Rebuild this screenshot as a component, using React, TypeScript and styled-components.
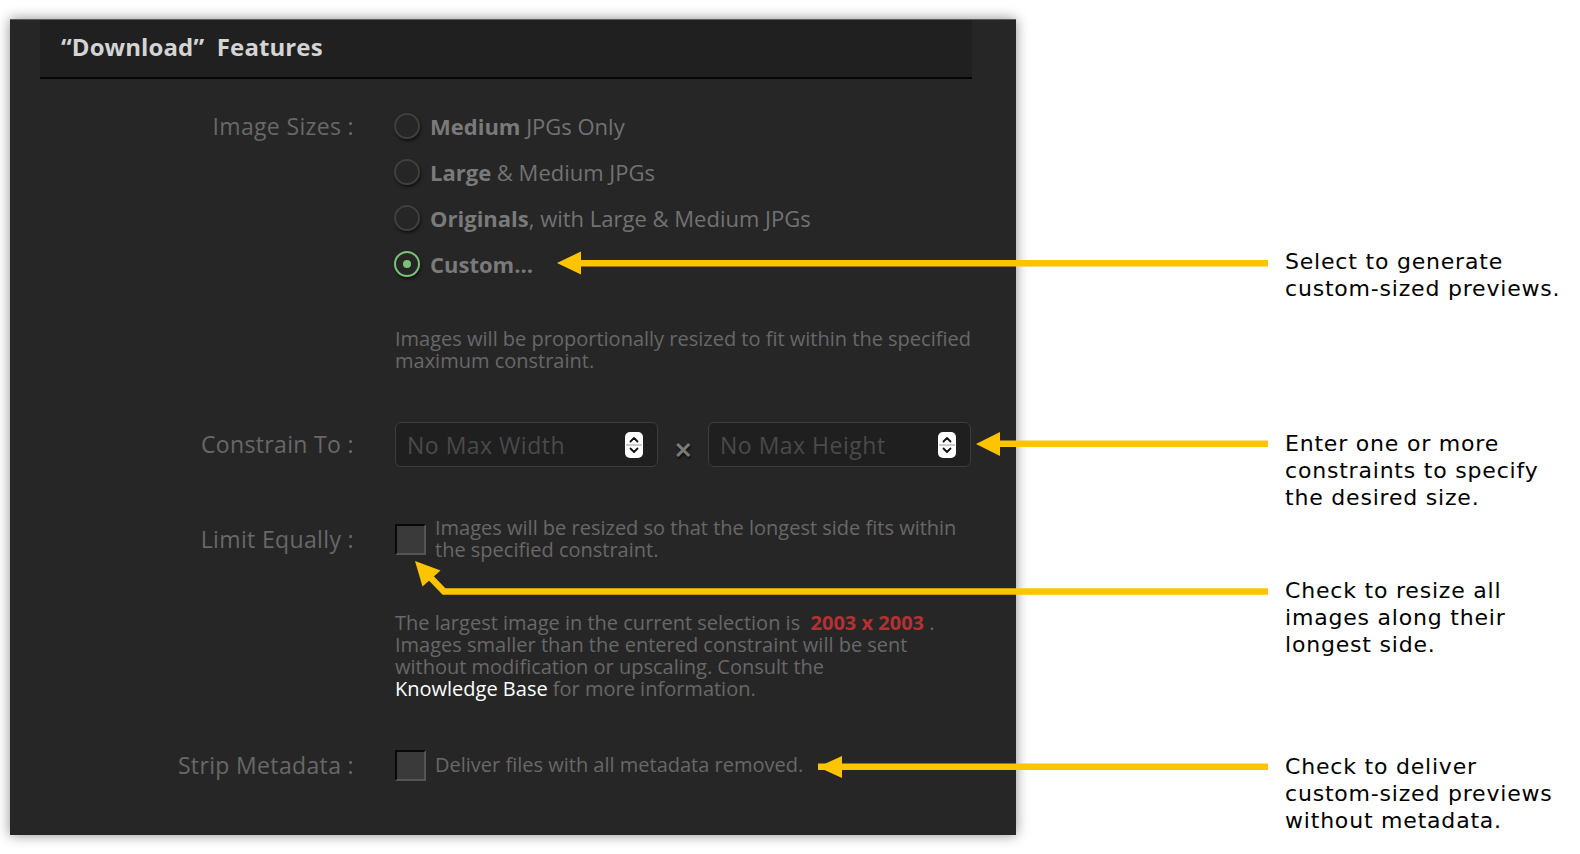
import React from 'react';
import styled, { createGlobalStyle } from 'styled-components';

const GlobalStyle = createGlobalStyle`
  html, body {
    margin: 0;
    padding: 0;
    background: #ffffff;
  }
  body {
    font-family: "Open Sans", "Noto Sans", sans-serif;
  }
`;

const YELLOW = '#ffc400';

const sizeOptions = [
  { bold: 'Medium', rest: ' JPGs Only', checked: false },
  { bold: 'Large', rest: ' & Medium JPGs', checked: false },
  { bold: 'Originals', rest: ', with Large & Medium JPGs', checked: false },
  { bold: 'Custom...', rest: '', checked: true },
];

const notes = [
  { top: 248, lines: ['Select to generate', 'custom-sized previews.'] },
  { top: 128, lines: ['Enter one or more', 'constraints to specify', 'the desired size.'] },
  { top: 66, lines: ['Check to resize all', 'images along their', 'longest side.'] },
  { top: 95, lines: ['Check to deliver', 'custom-sized previews', 'without metadata.'] },
];

const Spinner: React.FC = () => (
  <SpinBox>
    <svg width="18" height="26" viewBox="0 0 18 26">
      <path d="M5.5 9.5 L9 6 L12.5 9.5" fill="none" stroke="#111" strokeWidth="1.8" strokeLinecap="round" strokeLinejoin="round" />
      <line x1="1" y1="13" x2="17" y2="13" stroke="#bdbdbd" strokeWidth="1.5" />
      <path d="M5.5 16.5 L9 20 L12.5 16.5" fill="none" stroke="#111" strokeWidth="1.8" strokeLinecap="round" strokeLinejoin="round" />
    </svg>
  </SpinBox>
);

// Arrows sit over the panel and the page, so they get their own layer
const Arrows: React.FC = () => (
  <ArrowLayer width="1580" height="854" viewBox="0 0 1580 854">
    <g fill={YELLOW} stroke="none">
      <rect x="578" y="260" width="690" height="6.5" />
      <polygon points="557,263 581,251.5 581,274.5" />

      <rect x="998" y="440.5" width="270" height="6.5" />
      <polygon points="976,444 1000,432 1000,456" />

      <rect x="818" y="763.5" width="450" height="6.5" />
      <polygon points="818,767 842,756 842,778" />

      <polygon points="415,561 440.5,570.5 422.5,586.5" />
    </g>
    <polyline points="1268,591.5 444,591.5 429,576" fill="none" stroke={YELLOW} strokeWidth="6.5" strokeLinejoin="miter" />
  </ArrowLayer>
);

const App: React.FC = () => {
  return (
    <Page>
      <GlobalStyle />
      <Panel>
        <Header>
          <HeaderTitle>“Download”&nbsp; Features</HeaderTitle>
        </Header>

        <FieldRow $mt={24}>
          <Label $lh={46}>Image Sizes :</Label>
          <RadioList>
            {sizeOptions.map(opt => (
              <RadioRow key={opt.bold}>
                <Radio $checked={opt.checked} />
                <RadioText>
                  <b>{opt.bold}</b>
                  {opt.rest}
                </RadioText>
              </RadioRow>
            ))}
          </RadioList>
        </FieldRow>

        <FieldRow $mt={41}>
          <span />
          <Note>
            Images will be proportionally resized to fit within the specified
            <br />
            maximum constraint.
          </Note>
        </FieldRow>

        <FieldRow $mt={50}>
          <Label $lh={45}>Constrain To :</Label>
          <InputGroup>
            <NumberBox>
              <Placeholder>No Max Width</Placeholder>
              <Spinner />
            </NumberBox>
            <Times>✕</Times>
            <NumberBox>
              <Placeholder>No Max Height</Placeholder>
              <Spinner />
            </NumberBox>
          </InputGroup>
        </FieldRow>

        <FieldRow $mt={50}>
          <Label $lh={44}>Limit Equally :</Label>
          <CheckRow>
            <CheckBox />
            <Note>
              Images will be resized so that the longest side fits within
              <br />
              the specified constraint.
            </Note>
          </CheckRow>
        </FieldRow>

        <FieldRow $mt={51}>
          <span />
          <Note>
            The largest image in the current selection is&nbsp; <Red>2003 x 2003</Red> .
            <br />
            Images smaller than the entered constraint will be sent
            <br />
            without modification or upscaling. Consult the
            <br />
            <Link>Knowledge Base</Link> for more information.
          </Note>
        </FieldRow>

        <FieldRow $mt={49}>
          <Label $lh={32}>Strip Metadata :</Label>
          <CheckRow>
            <CheckBox />
            <Note $lh={32}>Deliver files with all metadata removed.</Note>
          </CheckRow>
        </FieldRow>
      </Panel>

      <NoteColumn>
        {notes.map(n => (
          <Callout key={n.lines[0]} $mt={n.top}>
            {n.lines.map(l => (
              <div key={l}>{l}</div>
            ))}
          </Callout>
        ))}
      </NoteColumn>

      <Arrows />
    </Page>
  );
};

const Page = styled.div`
  position: relative;
  width: 1580px;
  height: 854px;
  overflow: hidden;
  display: flex;
  align-items: flex-start;
  background: #fff;
`;

const Panel = styled.div`
  width: 1006px;
  margin: 19px 0 0 10px;
  padding-bottom: 54px;
  background: #262626;
  border-top: 1px solid #5c5c5c;
  box-shadow: 0 0 12px rgba(0, 0, 0, 0.45);
  box-sizing: border-box;
`;

const Header = styled.div`
  margin: 0 44px 0 30px;
  height: 59px;
  background: #202020;
  border-bottom: 2px solid #060606;
  display: flex;
  align-items: center;
  padding: 0 0 5px 21px;
  box-sizing: border-box;
`;

const HeaderTitle = styled.h1`
  margin: 0;
  font-size: 24px;
  font-weight: 700;
  color: #d4d4d4;
  letter-spacing: 0.1px;
`;

const FieldRow = styled.div<{ $mt: number }>`
  display: grid;
  grid-template-columns: 344px 1fr;
  column-gap: 41px;
  margin-top: ${p => p.$mt}px;
  align-items: start;
`;

const Label = styled.div<{ $lh: number }>`
  text-align: right;
  font-size: 23px;
  letter-spacing: 0.35px;
  line-height: ${p => p.$lh}px;
  color: #686868;
  white-space: nowrap;
`;

const RadioList = styled.div`
  display: flex;
  flex-direction: column;
`;

const RadioRow = styled.div`
  display: flex;
  align-items: center;
  height: 46px;
`;

const Radio = styled.span<{ $checked: boolean }>`
  position: relative;
  width: 22px;
  height: 22px;
  border-radius: 50%;
  border: 2px solid ${p => (p.$checked ? '#79c276' : '#3f3f3f')};
  box-shadow: 1px 2px 3px rgba(0, 0, 0, 0.55);
  margin-left: -1px;
  margin-right: 10px;
  flex-shrink: 0;

  &::after {
    content: '';
    display: ${p => (p.$checked ? 'block' : 'none')};
    position: absolute;
    left: 50%;
    top: 50%;
    width: 8px;
    height: 8px;
    margin: -4px 0 0 -4px;
    border-radius: 50%;
    background: #79c276;
  }
`;

const RadioText = styled.span`
  font-size: 22px;
  color: #727272;
  white-space: nowrap;

  b {
    font-weight: 700;
    color: #7a7a7a;
  }
`;

const Note = styled.div<{ $lh?: number }>`
  font-size: 20px;
  line-height: ${p => p.$lh ?? 22}px;
  color: #686868;
  white-space: nowrap;
`;

const Red = styled.b`
  color: #b53131;
  font-weight: 700;
`;

const Link = styled.span`
  color: #ffffff;
`;

const InputGroup = styled.div`
  display: flex;
  align-items: center;
`;

const NumberBox = styled.div`
  width: 263px;
  height: 45px;
  box-sizing: border-box;
  display: flex;
  align-items: center;
  justify-content: space-between;
  padding: 0 14px 0 11px;
  background: #1f1f1f;
  border: 1px solid #3d3d3d;
  border-radius: 6px;
`;

const Placeholder = styled.span`
  font-size: 23px;
  letter-spacing: 0.5px;
  color: #4a4a4a;
  white-space: nowrap;
`;

const SpinBox = styled.span`
  display: flex;
  width: 18px;
  height: 26px;
  background: #fff;
  border-radius: 5px;
`;

const Times = styled.span`
  width: 50px;
  text-align: center;
  font-size: 22px;
  font-weight: 700;
  color: #7a7a7a;
  text-shadow: 1px 2px 2px rgba(0, 0, 0, 0.6);
  padding-top: 8px;
`;

const CheckRow = styled.div`
  display: flex;
  align-items: center;
  gap: 9px;
`;

const CheckBox = styled.span`
  width: 31px;
  height: 31px;
  box-sizing: border-box;
  background: #3a3a3a;
  border-top: 2px solid #080808;
  border-left: 2px solid #080808;
  border-right: 2px solid #555;
  border-bottom: 2px solid #555;
  flex-shrink: 0;
`;

const NoteColumn = styled.div`
  display: flex;
  flex-direction: column;
  margin-left: 269px;
`;

const Callout = styled.div<{ $mt: number }>`
  margin-top: ${p => p.$mt}px;
  font-family: "DejaVu Sans", Verdana, sans-serif;
  font-size: 22px;
  letter-spacing: 0.8px;
  line-height: 27px;
  color: #000;
  white-space: nowrap;
`;

const ArrowLayer = styled.svg`
  position: absolute;
  left: 0;
  top: 0;
  pointer-events: none;
`;

export default App;
